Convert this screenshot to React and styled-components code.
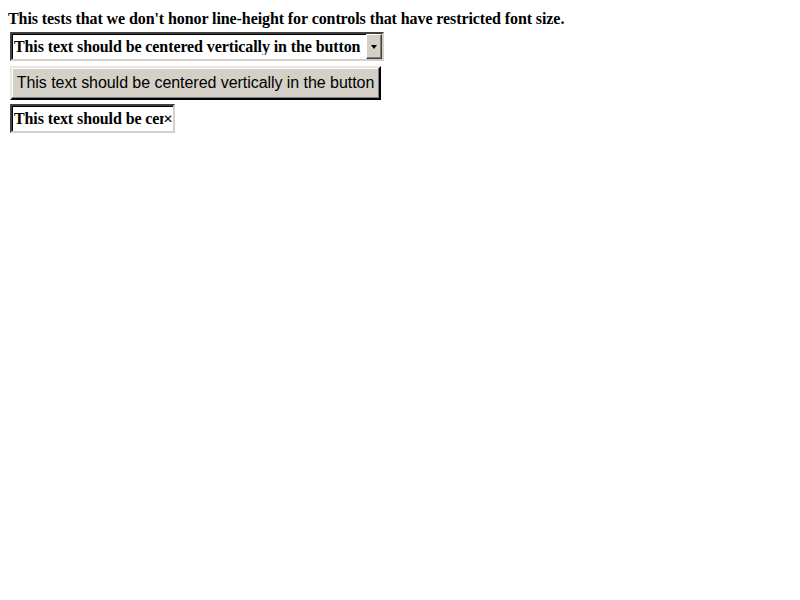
import React from 'react';
import styled, { createGlobalStyle } from 'styled-components';

const GlobalStyle = createGlobalStyle`
  html, body {
    margin: 0;
    background: #fff;
  }
  body {
    padding: 8px;
    font-family: "Liberation Serif", "DejaVu Serif", serif;
    font-size: 16px;
    color: #000;
  }
`;

const Page = styled.div`
  display: flex;
  flex-direction: column;
  align-items: flex-start;
`;

const Intro = styled.div`
  font-weight: bold;
  line-height: 20px;
  margin-top: 1px;
  letter-spacing: -0.09px;
`;

const insetBorder = `
  border-style: solid;
  border-width: 2px;
  border-color: #404040 #d4d0c8 #d4d0c8 #404040;
  box-shadow: inset 1px 1px 0 #000, 1px 1px 0 #fff;
`;

const SelectBox = styled.div`
  ${insetBorder}
  box-sizing: border-box;
  display: flex;
  align-items: center;
  margin: 3px 0 0 2px;
  width: 374px;
  height: 29px;
  padding: 0 0 0 2px;
  background: #fff;
  font-weight: bold;
  font-size: 16px;
  line-height: 1;
  letter-spacing: -0.1px;
  white-space: nowrap;
`;

const SelectText = styled.span`
  flex: 1;
  overflow: hidden;
`;

const ArrowButton = styled.span`
  box-sizing: border-box;
  display: flex;
  align-items: center;
  justify-content: center;
  width: 16px;
  height: 25px;
  background: #d4d0c8;
  border: 1px solid;
  border-color: #fff #404040 #404040 #fff;
  box-shadow: inset -1px -1px 0 #808080;
`;

const Arrow = styled.span`
  width: 0;
  height: 0;
  margin-top: 1px;
  border-left: 3.5px solid transparent;
  border-right: 3.5px solid transparent;
  border-top: 4px solid #000;
`;

const PushButton = styled.button`
  box-sizing: border-box;
  display: block;
  margin: 5px 0 0 2px;
  width: 371px;
  height: 34px;
  padding: 0 4px;
  background: #d4d0c8;
  border-style: solid;
  border-width: 2px;
  border-color: #e8e6e2 #000 #000 #e8e6e2;
  box-shadow: inset -1px -1px 0 #808080, inset 1px 1px 0 #fff;
  font-family: "Liberation Sans", Arial, sans-serif;
  font-size: 16px;
  color: #000;
  line-height: 1;
  letter-spacing: -0.05px;
  text-align: center;
  white-space: nowrap;
`;

const SearchBox = styled.div`
  ${insetBorder}
  box-sizing: border-box;
  display: flex;
  align-items: center;
  margin: 4px 0 0 2px;
  width: 165px;
  height: 29px;
  padding: 0 2px 0 2px;
  background: #fff;
  font-weight: bold;
  letter-spacing: -0.1px;
  white-space: nowrap;
`;

const SearchText = styled.span`
  flex: 1;
  min-width: 0;
  overflow: hidden;
`;

const Clear = styled.span`
  flex: none;
  width: 8px;
  margin-left: -1px;
  font-family: "DejaVu Sans", sans-serif;
  font-weight: normal;
  font-size: 12px;
  line-height: 1;
`;

export default function App() {
  return (
    <Page>
      <GlobalStyle />
      <Intro>This tests that we don't honor line-height for controls that have restricted font size.</Intro>
      <SelectBox>
        <SelectText>This text should be centered vertically in the button</SelectText>
        <ArrowButton><Arrow /></ArrowButton>
      </SelectBox>
      <PushButton>This text should be centered vertically in the button</PushButton>
      <SearchBox>
        <SearchText>This text should be centered vertically in the button</SearchText>
        <Clear>✕</Clear>
      </SearchBox>
    </Page>
  );
}
